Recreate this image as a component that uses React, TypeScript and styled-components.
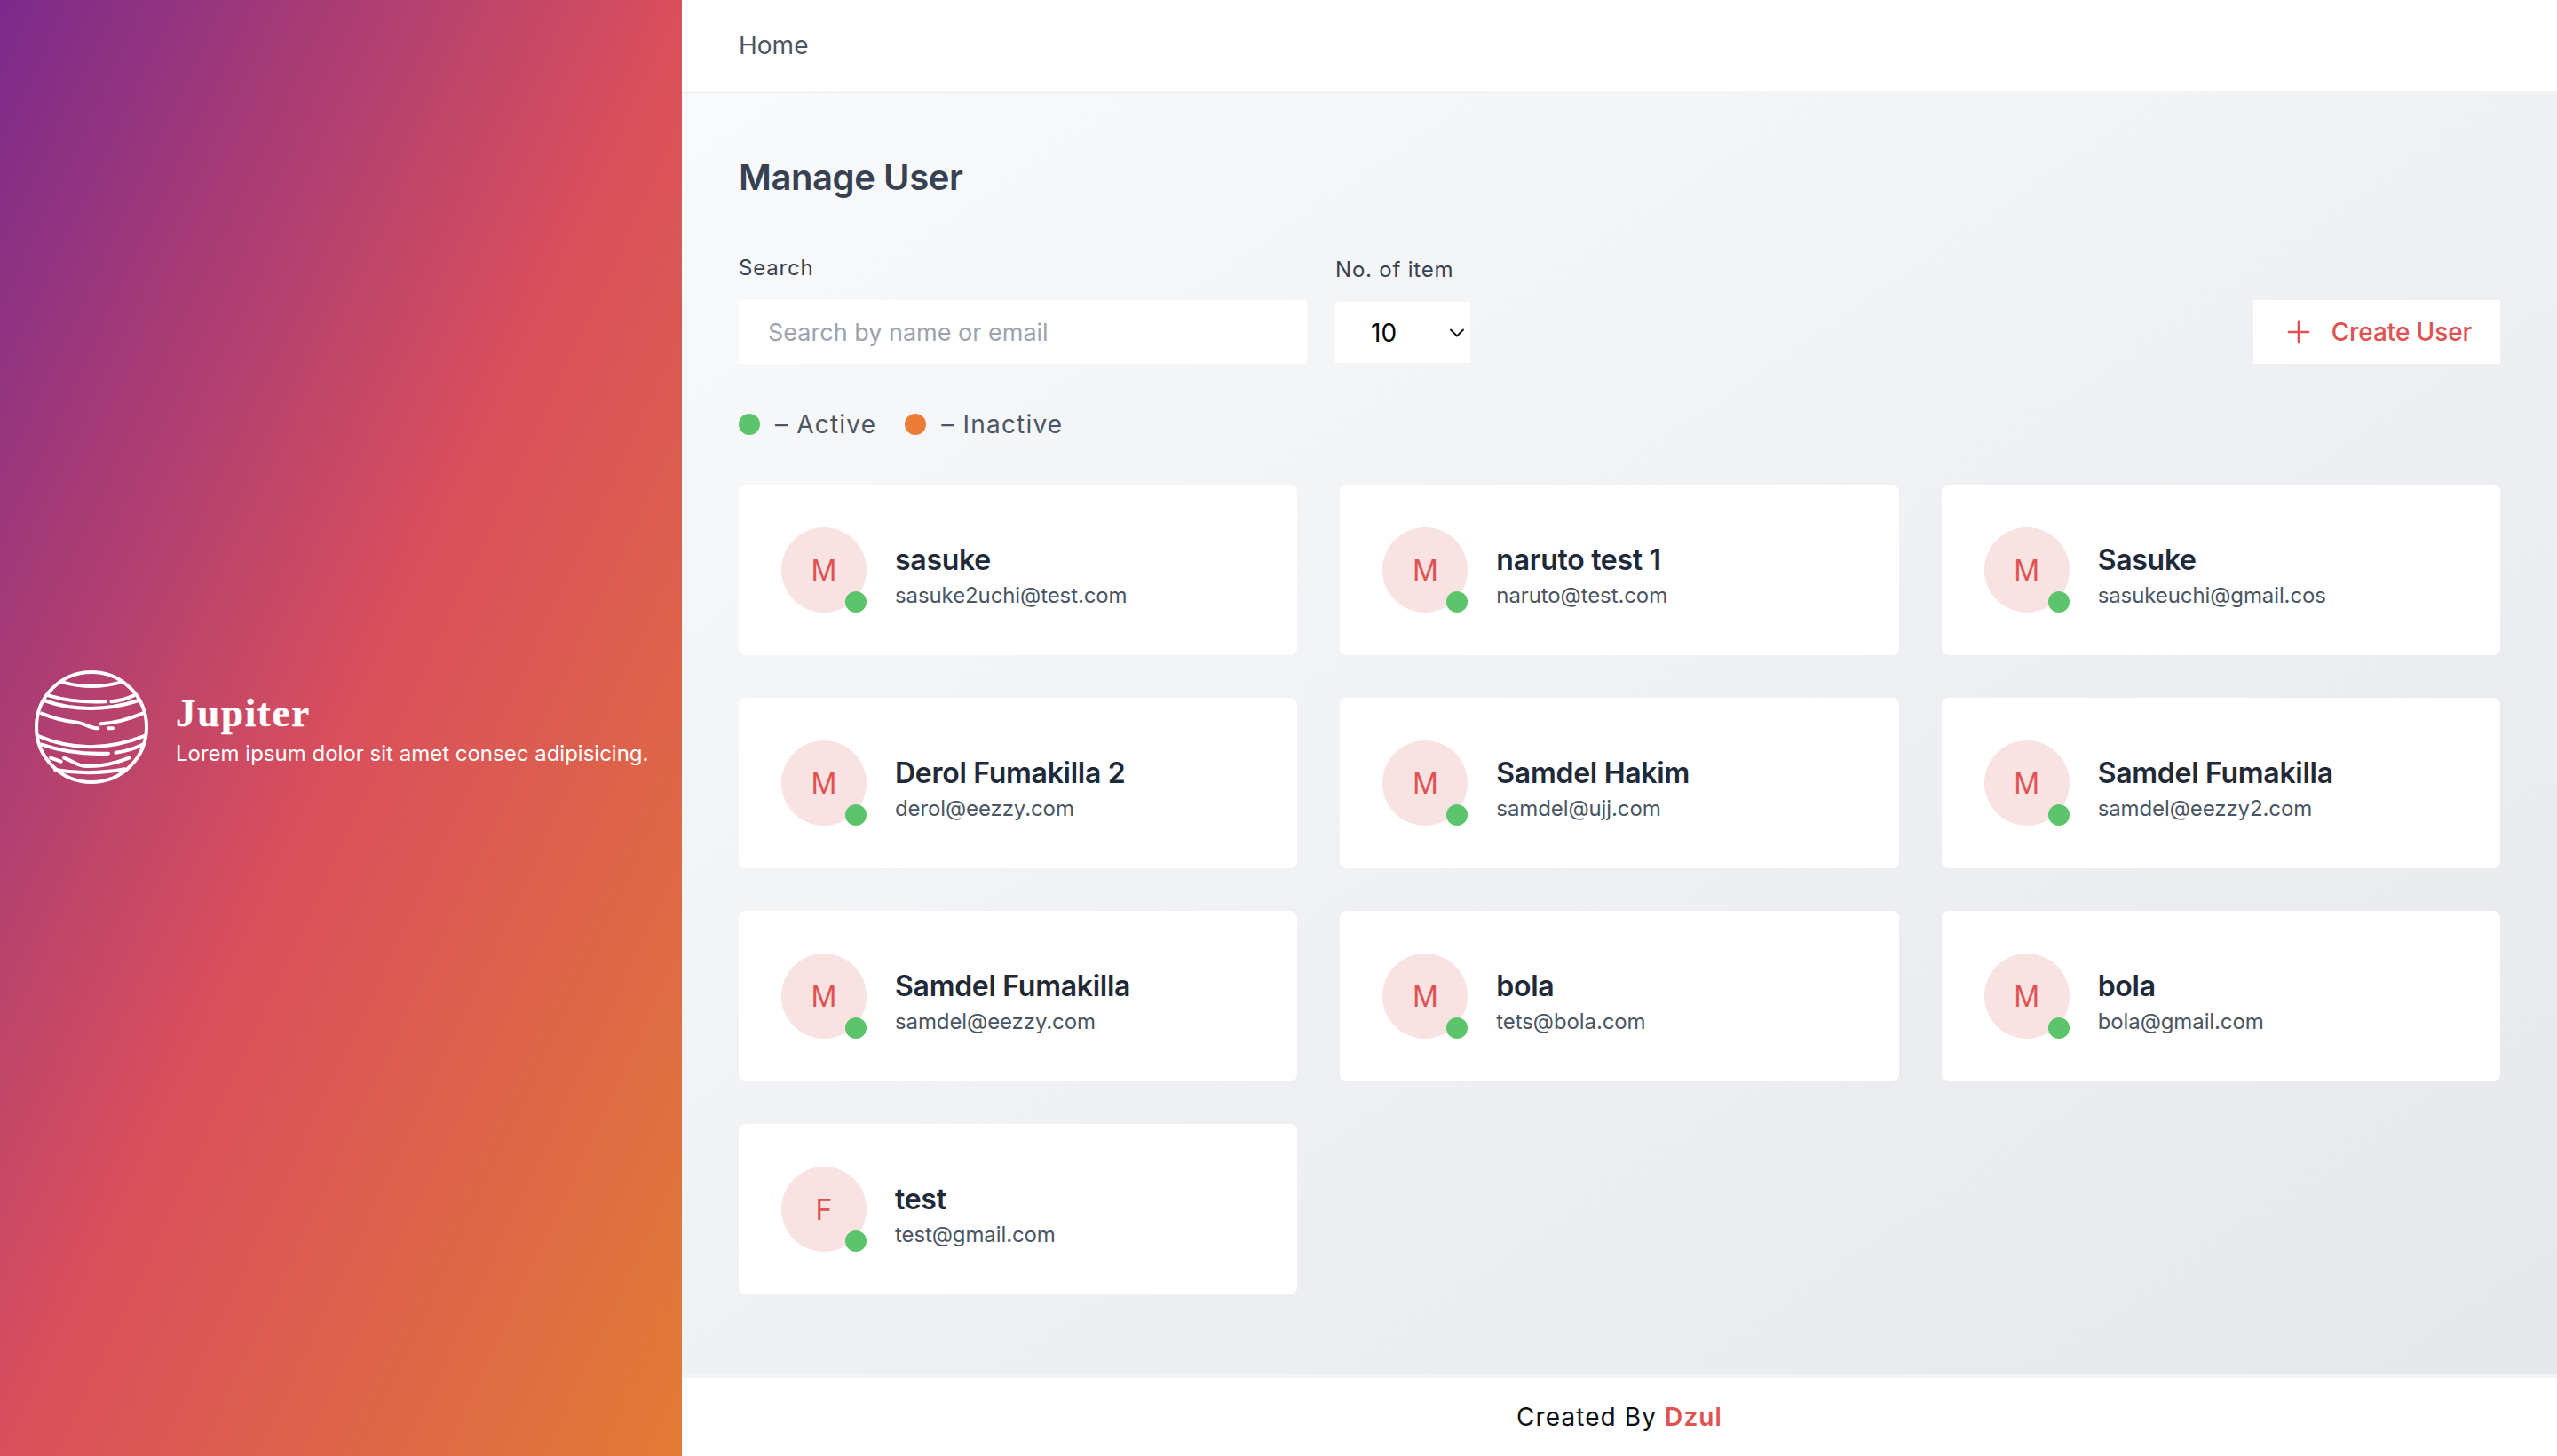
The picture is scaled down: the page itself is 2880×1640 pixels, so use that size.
import React from "react";
import styled, { createGlobalStyle } from "styled-components";
import { Plus, ChevronDown } from "lucide-react";

const Global = createGlobalStyle`
  html, body { margin: 0; padding: 0; }
  body { font-family: Inter, "Liberation Sans", sans-serif; }
  * { box-sizing: border-box; }
`;
const Shell = styled.div`
  display: flex; width: 2880px; height: 1640px; overflow: hidden;
`;
const Sidebar = styled.aside`
  width: 768px; flex: none; display: flex; align-items: center; gap: 31px;
  padding: 0 0 2px 39px; color: #fff;
  background: linear-gradient(to bottom right, #7b2a8c 0%, #d94f5c 50%, #e27b35 100%);
`;
const Brand = styled.div`
  display: flex; flex-direction: column; gap: 5px; margin-top: 4px;
`;
const BrandName = styled.div`
  font-family: "Liberation Serif", serif; font-weight: 700; font-size: 45px; line-height: 50px; letter-spacing: 1.7px;
  -webkit-text-stroke: 0.4px #fff;
`;
const BrandText = styled.div`
  font-size: 24px; line-height: 32px; white-space: nowrap;
`;
const Main = styled.div`
  flex: 1; min-width: 0; display: flex; flex-direction: column;
`;
const Header = styled.header`
  height: 102px; flex: none; background: #fff; padding: 0 64px; display: flex; align-items: center;
  font-size: 28px; color: #4b5563; box-shadow: 0 4px 0 #f3f4f6; position: relative;
`;
const Content = styled.main`
  flex: 1; min-height: 0; padding: 74px 64px 0; background: linear-gradient(to bottom right, #f9fafb, #e5e7eb);
`;
const Title = styled.h1`
  margin: 0; font-size: 40px; line-height: 48px; font-weight: 600; letter-spacing: -0.42px; color: #374151;
`;
const Controls = styled.div`
  display: flex; align-items: flex-end; margin-top: 62px;
`;
const Field = styled.label<{ $w: number; $mb?: number }>`
  display: flex; flex-direction: column; width: ${p => p.$w}px; margin-right: 32px; margin-bottom: ${p => p.$mb ?? 0}px;
`;
const FieldLabel = styled.span`
  font-size: 24px; line-height: 32px; letter-spacing: 0.8px; color: #374151; margin-bottom: 20px;
`;
const SearchInput = styled.input`
  width: 100%; height: 72px; border: none; outline: none; background: #fff; padding: 0 33px;
  font: 400 27px Inter, sans-serif; color: #374151;
  &::placeholder { color: #9ca3af; opacity: 1; }
`;
const SelectWrap = styled.div`
  position: relative; width: 100%; height: 69px;
  svg { position: absolute; right: 1px; top: 50%; transform: translateY(-50%); color: #111; pointer-events: none; }
`;
const Select = styled.select`
  appearance: none; width: 100%; height: 100%; border: none; outline: none; background: #fff; border-radius: 0; padding: 0 0 0 40px;
  font: 400 28px Inter, sans-serif; color: #000;
`;
const CreateButton = styled.button`
  margin-left: auto; width: 278px; height: 72px; border: none; background: #fff; display: flex; align-items: center;
  justify-content: center; gap: 18px; color: #e05252; font: 500 28px Inter, sans-serif; letter-spacing: -0.1px; padding: 0;
`;
const Legend = styled.div`
  display: flex; align-items: center; margin-top: 56px; font-size: 28px; line-height: 24px; letter-spacing: 1.2px; color: #4b5563;
`;
const LegendItem = styled.span`
  display: flex; align-items: center; gap: 17px; margin-right: 32px;
`;
const Dot = styled.span<{ $c: string }>`
  width: 24px; height: 24px; border-radius: 50%; background: ${p => p.$c}; flex: none;
`;
const Grid = styled.div`
  display: grid; grid-template-columns: repeat(3, 1fr); gap: 48px; margin-top: 56px;
`;
const Card = styled.article`
  height: 192px; background: #fff; border-radius: 8px; padding: 48px; display: flex; align-items: center; gap: 32px;
`;
const Avatar = styled.div`
  position: relative; width: 96px; height: 96px; border-radius: 50%; background: #f9e2e2; color: #e05252;
  display: flex; align-items: center; justify-content: center; font-size: 32px; flex: none;
`;
const Status = styled(Dot)`
  position: absolute; right: 0; bottom: 0;
`;
const Info = styled.div`
  display: flex; flex-direction: column; gap: 4px; min-width: 0; padding-top: 13px;
`;
const Name = styled.div`
  font-size: 32px; line-height: 40px; font-weight: 600; letter-spacing: -0.28px; color: #1f2937;
`;
const Email = styled.div`
  font-size: 24px; line-height: 32px; letter-spacing: -0.1px; color: #4b5563;
`;
const Footer = styled.footer`
  height: 88px; flex: none; background: #fff; display: flex; align-items: center; justify-content: center; gap: 9px;
  font-size: 28px; letter-spacing: 1.1px; color: #111; box-shadow: 0 -4px 0 #f3f4f6; position: relative;
`;
const Accent = styled.span`
  color: #e05252; font-weight: 600;
`;

const JupiterIcon = () => (
  <svg width="128" height="128" viewBox="56 44 384 384" fill="none" stroke="#fff" strokeWidth="12" strokeLinecap="round" style={{ flex: "none" }}>
    <circle cx="248" cy="236" r="186" />
    <path d="M150 84Q248 112 348 84" />
    <path d="M105 130Q190 155 296 150M315 150Q355 146 390 130" />
    <path d="M88 146Q240 200 408 146" />
    <path d="M80 190Q140 215 200 220C230 224 240 240 270 240M280 225Q350 220 420 190M305 240H320" />
    <path d="M65 265Q240 340 430 265" />
    <path d="M80 295Q180 330 305 325M330 322Q380 315 420 295" />
    <path d="M110 340L145 352M155 340C180 345 190 365 230 368Q300 370 375 340" />
    <path d="M125 380Q240 400 360 378" />
  </svg>
);

const users = [
  ["M", "sasuke", "sasuke2uchi@test.com"],
  ["M", "naruto test 1", "naruto@test.com"],
  ["M", "Sasuke", "sasukeuchi@gmail.cos"],
  ["M", "Derol Fumakilla 2", "derol@eezzy.com"],
  ["M", "Samdel Hakim", "samdel@ujj.com"],
  ["M", "Samdel Fumakilla", "samdel@eezzy2.com"],
  ["M", "Samdel Fumakilla", "samdel@eezzy.com"],
  ["M", "bola", "tets@bola.com"],
  ["M", "bola", "bola@gmail.com"],
  ["F", "test", "test@gmail.com"],
];

export default function App() {
  return (
    <Shell>
      <Global />
      <Sidebar>
        <JupiterIcon />
        <Brand>
          <BrandName>Jupiter</BrandName>
          <BrandText>Lorem ipsum dolor sit amet consec adipisicing.</BrandText>
        </Brand>
      </Sidebar>
      <Main>
        <Header>Home</Header>
        <Content>
          <Title>Manage User</Title>
          <Controls>
            <Field $w={640}>
              <FieldLabel>Search</FieldLabel>
              <SearchInput placeholder="Search by name or email" />
            </Field>
            <Field $w={152} $mb={1}>
              <FieldLabel>No. of item</FieldLabel>
              <SelectWrap>
                <Select defaultValue="10">
                  <option>10</option>
                  <option>20</option>
                </Select>
                <ChevronDown size={28} strokeWidth={1.6} />
              </SelectWrap>
            </Field>
            <CreateButton>
              <Plus size={38} strokeWidth={1.7} />
              Create User
            </CreateButton>
          </Controls>
          <Legend>
            <LegendItem><Dot $c="#5cc46a" />– Active</LegendItem>
            <LegendItem><Dot $c="#ea7c36" />– Inactive</LegendItem>
          </Legend>
          <Grid>
            {users.map(([g, n, e], i) => (
              <Card key={i}>
                <Avatar>{g}<Status $c="#5cc46a" /></Avatar>
                <Info>
                  <Name>{n}</Name>
                  <Email>{e}</Email>
                </Info>
              </Card>
            ))}
          </Grid>
        </Content>
        <Footer>Created By <Accent>Dzul</Accent></Footer>
      </Main>
    </Shell>
  );
}
